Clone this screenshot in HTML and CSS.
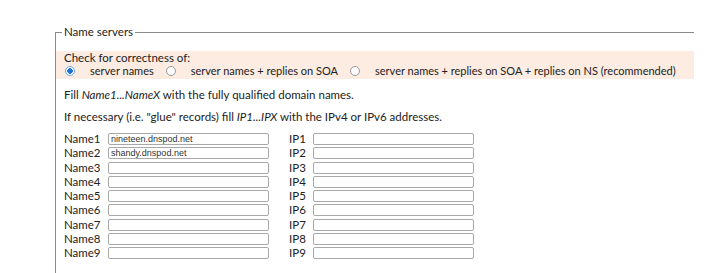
FILE: index.html
```html
<!DOCTYPE html>
<html lang="en">
<head>
    <meta charset="UTF-8">
    <title>Name servers</title>
    <link rel="stylesheet" href="styles.css">
</head>
<body>
    <form class="page">
        <fieldset class="ns-box">
            <legend>Name servers</legend>

            <div class="check">
                <div>Check for correctness of:</div>
                <div class="check-options">
                    <label><input type="radio" name="mode" checked><span>server names</span></label>
                    <label><input type="radio" name="mode"><span>server names + replies on SOA</span></label>
                    <label><input type="radio" name="mode"><span>server names + replies on SOA + replies on NS (recommended)</span></label>
                </div>
            </div>

            <p class="hint">Fill <i>Name1...NameX</i> with the fully qualified domain names.</p>
            <p class="hint">If necessary (i.e. "glue" records) fill <i>IP1...IPX</i> with the IPv4 or IPv6 addresses.</p>

            <div class="servers">
                <span>Name1</span><input type="text" value="nineteen.dnspod.net"><span>IP1</span><input type="text">
                <span>Name2</span><input type="text" value="shandy.dnspod.net"><span>IP2</span><input type="text">
                <span>Name3</span><input type="text"><span>IP3</span><input type="text">
                <span>Name4</span><input type="text"><span>IP4</span><input type="text">
                <span>Name5</span><input type="text"><span>IP5</span><input type="text">
                <span>Name6</span><input type="text"><span>IP6</span><input type="text">
                <span>Name7</span><input type="text"><span>IP7</span><input type="text">
                <span>Name8</span><input type="text"><span>IP8</span><input type="text">
                <span>Name9</span><input type="text"><span>IP9</span><input type="text">
            </div>
        </fieldset>
    </form>
</body>
</html>
```

FILE: styles.css
```css
body {
    margin: 0;
    background-color: #fff;
    color: #222;
    font-family: Lato, "Noto Sans", sans-serif;
    font-size: 11.5px;
}
.page {
    padding: 25px 20px 0 55px;
}
.ns-box {
    margin: 0;
    padding: 0 0 20px;
    width: 638px;
    border: none;
    border-top: 1px solid #8a8a8a;
    border-left: 1px solid #8a8a8a;
}
.ns-box legend {
    margin-left: 6px;
    padding: 0 2px;
    line-height: 14px;
}
.check {
    margin-top: 12px;
    padding: 0 8px 2px;
    background-color: #fcece2;
    line-height: 13px;
    white-space: nowrap;
}
.check-options {
    display: flex;
    gap: 11px;
    font-size: 11px;
}
.check-options label {
    display: flex;
    align-items: center;
    gap: 15px;
}
.check-options input {
    appearance: none;
    flex: none;
    margin: 0 0 0 1px;
    width: 10px;
    height: 10px;
    border: 1px solid #9a9a9a;
    border-radius: 50%;
    background-color: #fff;
}
.check-options input:checked {
    border-color: #6aa6ee;
    background: radial-gradient(circle, #1f6fd6 0 2.5px, #fff 3px);
}
.hint {
    margin: 9px 0 0 8px;
    line-height: 13px;
    white-space: nowrap;
}
.servers {
    display: grid;
    grid-template-columns: 44px 161px 44px 161px;
    grid-auto-rows: 14.25px;
    line-height: 14.25px;
    align-items: center;
    margin: 9px 0 0 8px;
}
.servers span:nth-child(4n+3) {
    padding-left: 20px;
}
.servers input {
    box-sizing: border-box;
    height: 12px;
    margin: 0;
    padding: 0 2px;
    border: 1px solid #a8a8a8;
    border-radius: 2px;
    font-family: "Liberation Sans", Arial, sans-serif;
    font-size: 9px;
    color: #333;
}
```
